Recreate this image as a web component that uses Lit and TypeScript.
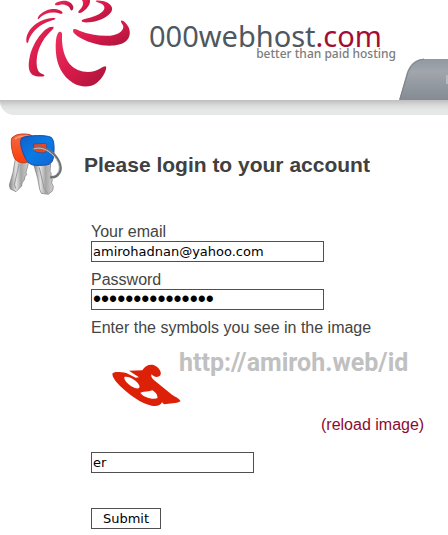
import { LitElement, html, css, svg } from "lit";
import { customElement, state } from "lit/decorators.js";

const swirl = svg`
  <defs>
    <linearGradient id="petal" x1="0" y1="0" x2="1" y2="1">
      <stop offset="0" stop-color="#f0305f" />
      <stop offset="0.5" stop-color="#d71a4a" />
      <stop offset="1" stop-color="#a8153a" />
    </linearGradient>
  </defs>
  <g fill="url(#petal)">
    <path d="M219 89 C224 85 230 89 238 92 C268 104 300 109 331 107 C354 105 368 94 370 82 C371 74 362 69 363 63 C366 58 378 68 385 80 C393 96 390 112 378 124 C362 137 332 140 302 135 C266 129 232 113 220 97 Z" />
    <path d="M177 96 C184 94 187 98 186 108 C185 139 192 171 209 192 C227 213 258 220 284 213 C302 208 309 198 317 199 C324 204 308 237 289 250 C269 264 241 262 218 248 C188 230 171 196 168 160 C166 133 167 104 177 96 Z" />
    <path d="M160 80 C163 84 157 89 150 96 C127 119 112 148 110 181 C109 203 114 216 122 220 C129 223 134 224 133 227 C128 232 107 230 97 224 C85 215 84 194 89 172 C96 135 125 90 150 81 Z" />
    <path d="M166 55 C167 59 160 60 151 63 C121 72 95 94 86 121 C85 128 82 131 80 128 C76 113 83 95 97 81 C116 62 146 51 166 55 Z" />
    <path d="M188 39 C187 43 179 40 170 38 C147 35 131 42 121 52 C117 57 114 59 113 56 C116 44 132 32 151 28 C169 25 187 31 188 39 Z" />
    <path d="M165 14 C164 10 172 5 185 3 C203 0 216 8 220 20 C221 28 215 34 212 30 C209 20 204 17 194 14 C182 11 170 19 165 14 Z" />
    <path d="M236 38 C232 35 239 31 244 24 C251 15 250 7 246 0 L270 0 C271 9 267 18 259 26 C251 34 241 41 236 38 Z" />
    <path d="M245 64 C244 59 249 58 257 56 C277 52 295 46 306 36 C315 28 316 20 307 13 C301 8 288 7 287 3 C291 0 312 2 323 8 C335 15 340 25 334 35 C325 49 301 62 275 66 C260 68 247 68 245 64 Z" />
  </g>`;

const keys = svg`
  <defs>
    <linearGradient id="steel" x1="0" y1="0" x2="1" y2="0">
      <stop offset="0" stop-color="#858585" />
      <stop offset="0.35" stop-color="#e2e2e2" />
      <stop offset="0.6" stop-color="#a5a5a5" />
      <stop offset="1" stop-color="#d2d2d2" />
    </linearGradient>
    <linearGradient id="blue" x1="0" y1="0" x2="1" y2="1">
      <stop offset="0" stop-color="#1560c8" />
      <stop offset="0.5" stop-color="#087be6" />
      <stop offset="1" stop-color="#1665cf" />
    </linearGradient>
    <linearGradient id="orange" x1="0" y1="0" x2="0" y2="1">
      <stop offset="0" stop-color="#f06a42" />
      <stop offset="1" stop-color="#ff3d08" />
    </linearGradient>
  </defs>
  <path d="M46 102 L86 112 L78 142 L80 149 L74 156 L74 163 L66 174 L65 183 L48 200 L31 192 L28 180 L39 142 Z" fill="url(#steel)" stroke="#777777" stroke-width="2" />
  <path d="M57 118 L43 179 L48 191" fill="none" stroke="#9a9a9a" stroke-width="3" />
  <path d="M49 30 C65 25 91 26 98 34 L94 102 C84 118 57 117 45 102 C35 84 31 47 36 38 Z" fill="url(#orange)" stroke="#c8401d" stroke-width="3" />
  <path d="M45 42 C55 34 73 32 87 34" fill="none" stroke="#ff9874" stroke-width="5" />
  <path d="M101 118 L152 117 L150 139 L154 146 L151 157 L157 164 L155 174 L160 184 L158 197 L145 208 L124 205 L119 193 L113 160 Z" fill="url(#steel)" stroke="#777777" stroke-width="2" />
  <path d="M118 128 L133 193 L143 203" fill="none" stroke="#959595" stroke-width="3" />
  <path d="M69 37 C88 31 139 29 153 37 C164 43 164 77 159 103 C155 120 139 122 107 121 C86 121 77 105 67 78 C60 59 59 41 69 37 Z" fill="url(#blue)" stroke="#174caa" stroke-width="3" />
  <path d="M101 57 L137 55 Q141 57 140 66 L137 82 Q132 85 110 82 L101 75 Z" fill="#f0441c" stroke="#1d4f9a" stroke-width="2" />
  <path d="M99 75 C104 65 128 65 146 76 C174 93 188 124 178 143 C171 155 161 158 151 156" fill="none" stroke="#6c7275" stroke-width="8" />
  <path d="M102 72 C113 67 130 69 145 79 C171 96 184 124 174 142" fill="none" stroke="#c8cccd" stroke-width="3" />`;

const captcha = svg`
  <path fill="#dc2108" fill-rule="evenodd" d="M67 101 C71 94 88 95 109 99 L137 113 L147 112 L117 92 L157 91 C164 78 177 72 190 75 C205 80 217 96 211 106 C204 114 190 111 185 103 C181 110 187 116 199 126 L246 164 C252 169 267 173 272 184 L261 188 L222 193 L216 187 C213 196 200 200 185 197 C153 190 119 164 96 143 C80 128 67 113 67 101 Z M103 111 C101 120 116 137 135 144 C144 147 151 144 148 137 C143 124 118 107 103 111 Z M151 158 C159 171 184 179 202 175 C204 165 197 157 187 151 C178 155 164 154 151 158 Z" />`;

@customElement("app-root")
export class AppRoot extends LitElement {
  @state() private email = "amirohadnan@yahoo.com";
  @state() private password = "amirohpassword1";
  @state() private symbols = "er";

  static styles = css`
    :host {
      display: block;
      min-height: 100vh;
      background: #ffffff;
      color: #444444;
      font: 16px/18px "Liberation Sans", Arial, sans-serif;
    }
    svg {
      display: block;
      flex: none;
    }
    .top {
      display: flex;
      align-items: flex-start;
      height: 100px;
      overflow: hidden;
    }
    .brand {
      display: flex;
      flex: none;
      color: inherit;
      text-decoration: none;
      font-family: "Noto Sans", "Open Sans", sans-serif;
    }
    .words {
      display: flex;
      flex-direction: column;
      align-items: flex-end;
      padding-top: 22px;
      width: 247px;
    }
    .name {
      align-self: flex-start;
      font-size: 29px;
      line-height: 28px;
      color: #50585f;
    }
    .com {
      color: #a30d35;
    }
    .tagline {
      font-size: 12px;
      line-height: 8px;
      font-weight: 500;
      color: #7c7c7c;
    }
    .tab {
      align-self: flex-end;
      margin-left: auto;
    }
    .bar {
      height: 15px;
      border-bottom-left-radius: 14px;
      background: linear-gradient(#bfbfbf, #dcdddd 40%, #e6e8e7 70%);
    }
    .title {
      display: flex;
      align-items: center;
      gap: 4px;
      padding-top: 10px;
    }
    h1 {
      margin: 0;
      font-size: 21px;
      line-height: 24px;
      color: #404040;
    }
    form {
      display: flex;
      flex-direction: column;
      align-items: flex-start;
      padding: 18px 24px 7px 91px;
    }
    .field {
      display: flex;
      flex-direction: column;
      margin-bottom: 9px;
    }
    input,
    button {
      box-sizing: border-box;
      height: 21px;
      margin: 0;
      border: 1px solid #505050;
      border-radius: 0;
      background: #ffffff;
      color: #000000;
      font: 13px/16px "DejaVu Sans", Verdana, sans-serif;
    }
    input {
      width: 233px;
      padding: 0 1px;
    }
    input[type="password"] {
      font: 23px/18px "Liberation Sans", Arial, sans-serif;
    }
    .short {
      width: 163px;
      margin-bottom: 35px;
    }
    button {
      width: 70px;
      padding: 0;
    }
    .challenge {
      display: flex;
      align-self: stretch;
      padding-top: 3px;
    }
    .mark {
      margin: 7px 0 0 -52px;
      font-family: Roboto, "Liberation Sans", sans-serif;
      font-size: 25px;
      font-weight: bold;
      line-height: 32px;
      color: #c0c0c0;
      white-space: nowrap;
    }
    .reload {
      margin-left: 230px;
      margin-bottom: 18px;
      color: #8c0a32;
      text-decoration: none;
      white-space: nowrap;
    }
  `;

  render() {
    return html`
      <header>
        <div class="top">
          <a class="brand" href="#">
            <svg width="149" height="100" viewBox="0 0 447 300" aria-hidden="true">${swirl}</svg>
            <span class="words">
              <span class="name">000webhost<span class="com">.com</span></span>
              <span class="tagline">better than paid hosting</span>
            </span>
          </a>
          <svg class="tab" width="49" height="42" viewBox="0 0 49 42" aria-hidden="true">
            <defs>
              <linearGradient id="tab" x1="0" y1="0" x2="0" y2="1">
                <stop offset="0" stop-color="#9298a0" />
                <stop offset="0.3" stop-color="#a0a6ac" />
                <stop offset="1" stop-color="#858b93" />
              </linearGradient>
            </defs>
            <path d="M0 42 L8 14 Q13 1 25 1 H49 V42 Z" fill="url(#tab)" />
            <path d="M1 41 L9 14 Q14 2 25 1" fill="none" stroke="#7d838b" />
            <path d="M48 17 V26" stroke="#b5bbc2" stroke-width="2" />
          </svg>
        </div>
        <div class="bar"></div>
      </header>
      <main>
        <div class="title">
          <svg width="80" height="80" viewBox="0 0 240 240" aria-hidden="true">${keys}</svg>
          <h1>Please login to your account</h1>
        </div>
        <form @submit=${(e: Event) => e.preventDefault()}>
          <div class="field">
            <label for="email">Your email</label>
            <input id="email" type="text" .value=${this.email}
              @input=${(e: Event) => (this.email = (e.target as HTMLInputElement).value)} />
          </div>
          <div class="field">
            <label for="password">Password</label>
            <input id="password" type="password" .value=${this.password}
              @input=${(e: Event) => (this.password = (e.target as HTMLInputElement).value)} />
          </div>
          <label for="symbols">Enter the symbols you see in the image</label>
          <div class="challenge">
            <svg width="140" height="76" viewBox="3 0 420 228" role="img" aria-label="Distorted symbols">${captcha}</svg>
            <span class="mark">http://amiroh.web/id</span>
          </div>
          <a class="reload" href="#">(reload image)</a>
          <input id="symbols" class="short" type="text" .value=${this.symbols}
            @input=${(e: Event) => (this.symbols = (e.target as HTMLInputElement).value)} />
          <button type="submit">Submit</button>
        </form>
      </main>
    `;
  }
}
